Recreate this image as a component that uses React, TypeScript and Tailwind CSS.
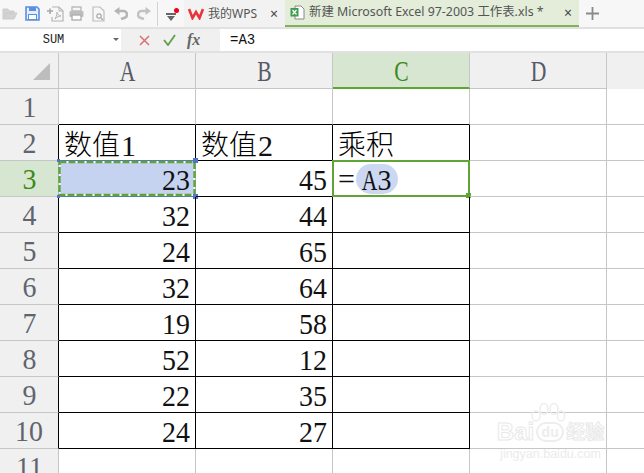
import React from 'react';

const ROWS: [string, string, string][] = [
  ['', '', ''],
  ['数值1', '数值2', '乘积'],
  ['23', '45', ''],
  ['32', '44', ''],
  ['24', '65', ''],
  ['32', '64', ''],
  ['19', '58', ''],
  ['52', '12', ''],
  ['22', '35', ''],
  ['24', '27', ''],
  ['', '', ''],
];

const SHEET_FONT = "font-['Liberation_Serif','Noto_Sans_CJK_SC',serif]";

function Narrow({ children }: { children: string }) {
  return <span className="inline-flex w-[15px] scale-x-[0.72] justify-center">{children}</span>;
}

function ToolIcons() {
  return (
    <div className="flex h-full w-[184px] shrink-0 items-center bg-[#f7f7f7] pl-[2px]">
      {/* open */}
      <svg width="16" height="14" viewBox="0 0 16 14" className="mr-[7px]">
        <path d="M1 12V2h5l1 2h5v2H4l-3 6h11l3-6H4" fill="#d2d2d2" stroke="#cccccc" />
      </svg>
      {/* save */}
      <svg width="15" height="15" viewBox="0 0 15 15" className="mr-[7px]">
        <path d="M1 1h11l2 2v11H1z" fill="#e6eefb" stroke="#5b8fe0" strokeWidth="1.6" />
        <rect x="4" y="1" width="7" height="4" fill="#5b8fe0" />
        <rect x="3.5" y="8.5" width="8" height="5" fill="#fff" stroke="#5b8fe0" />
      </svg>
      {/* export pdf */}
      <svg width="17" height="16" viewBox="0 0 17 16" className="mr-[5px]">
        <path d="M5 1h7l4 4v10H5v-4" fill="none" stroke="#b4b4b4" strokeWidth="1.2" />
        <path d="M12 1v4h4" fill="none" stroke="#b4b4b4" />
        <path d="M0 5h3V2.500M3 5h3M3 5v3" stroke="#a8a8a8" strokeWidth="1.6" fill="none" />
        <path d="M8 13c2-3 2-6 2-7 0 2 2 4 4 4-2 0-4 1-6 3z" fill="none" stroke="#b4b4b4" />
      </svg>
      {/* print */}
      <svg width="15" height="15" viewBox="0 0 15 15" className="mr-[8px]">
        <rect x="3" y="1" width="9" height="4" fill="none" stroke="#b8b8b8" strokeWidth="1.4" />
        <rect x="0.5" y="5" width="14" height="6" rx="1" fill="#bdbdbd" />
        <rect x="3" y="9" width="9" height="5" fill="#fff" stroke="#b0b0b0" strokeWidth="1.4" />
      </svg>
      {/* preview */}
      <svg width="13" height="16" viewBox="0 0 13 16" className="mr-[9px]">
        <path d="M1 1h7l4 4v10H1z" fill="none" stroke="#bdbdbd" strokeWidth="1.2" />
        <circle cx="7" cy="10" r="2.200" fill="none" stroke="#a8a8a8" strokeWidth="1.2" />
        <path d="M9 12l2 2" stroke="#a8a8a8" strokeWidth="1.4" />
      </svg>
      {/* undo */}
      <svg width="14" height="13" viewBox="0 0 14 13" className="mr-[9px]">
        <path d="M4 4h5a3.500 3.500 0 0 1 1 7l-3 1" fill="none" stroke="#b5b5b5" strokeWidth="2.6" />
        <path d="M5.500 0v8L0 4z" fill="#b5b5b5" />
      </svg>
      {/* redo */}
      <svg width="14" height="13" viewBox="0 0 14 13" className="mr-[6px]">
        <path d="M10 4H5a3.500 3.500 0 0 0-1 7l3 1" fill="none" stroke="#c2c2c2" strokeWidth="2.6" />
        <path d="M8.500 0v8L14 4z" fill="#c2c2c2" />
      </svg>
      <div className="mr-[8px] h-[24px] w-px bg-[#d2d2d2]" />
      {/* menu dropdown */}
      <div className="relative h-[14px] w-[11px]">
        <div className="absolute top-[6px] h-[2px] w-[10px] bg-[#666]" />
        <div className="absolute top-[9px] left-[1px] h-0 w-0 border-x-[4px] border-t-[5px] border-x-transparent border-t-[#666]" />
        <div className="absolute top-[1px] left-[8px] h-[5px] w-[5px] rounded-full bg-[#f00014]" />
      </div>
    </div>
  );
}

function TabBar() {
  return (
    <div className="flex h-[27px] w-full items-stretch bg-[#f7f7f7] font-['Noto_Sans','Noto_Sans_CJK_SC',sans-serif] text-[12px] text-[#555]">
      <ToolIcons />
      <div className="flex w-[101px] shrink-0 items-center bg-[#f2f2f2] pl-[4px]">
        <svg width="16" height="13" viewBox="0 0 16 13" className="mr-[4px]">
          <path d="M1 2l3.500 9 3.500-6 3.500 6L15 2" fill="none" stroke="#e8353b" strokeWidth="2.6" />
        </svg>
        <span className="whitespace-nowrap">我的WPS</span>
        <span className="ml-auto mr-[7px] text-[14px] leading-none text-[#444]">×</span>
      </div>
      <div className="flex w-[294px] shrink-0 items-center border-b-2 border-[#7fb35a] bg-[#e3edd9] pl-[5px]">
        <svg width="15" height="15" viewBox="0 0 15 15" className="mr-[4px]">
          <path d="M5 1h6l3 3v10H5z" fill="#fff" stroke="#8a8a8a" />
          <rect x="0.500" y="3" width="8" height="8.500" fill="#3f9b4f" />
          <path d="M2.500 5l4 4.500M6.500 5l-4 4.500" stroke="#fff" strokeWidth="1.3" />
        </svg>
        <span className="whitespace-nowrap text-[12.4px]">新建 Microsoft Excel 97-2003 工作表.xls *</span>
        <span className="ml-auto mr-[7px] text-[14px] leading-none text-[#444]">×</span>
      </div>
      <div className="flex w-[26px] shrink-0 items-center justify-center">
        <svg width="13" height="13" viewBox="0 0 13 13">
          <path d="M6.500 0v13M0 6.500h13" stroke="#8a8a8a" strokeWidth="1.800" />
        </svg>
      </div>
    </div>
  );
}

function FormulaBar() {
  return (
    <div className="flex h-[26px] w-full border-t-2 border-b-2 border-[#e1e1e1] bg-[#f0f0f0] font-['Liberation_Mono',monospace] text-[12px] text-[#222]">
      <div className="relative flex w-[121px] shrink-0 items-center justify-center bg-white pr-[14px]">
        SUM
        <div className="absolute right-[2px] top-[9px] h-0 w-0 border-x-[3px] border-t-[3px] border-x-transparent border-t-[#666]" />
      </div>
      <div className="flex w-[99px] shrink-0 items-center bg-[#f0f0f0] pl-[18px]">
        <svg width="11" height="11" viewBox="0 0 11 11" className="mr-[13px]">
          <path d="M1 1l9 9M10 1l-9 9" stroke="#d9706f" strokeWidth="1.500" />
        </svg>
        <svg width="13" height="12" viewBox="0 0 13 12" className="mr-[11px]">
          <path d="M1 6l4 5 7-10" fill="none" stroke="#5f9f4c" strokeWidth="1.800" />
        </svg>
        <span className="font-['Liberation_Serif',serif] text-[16px] font-bold italic text-[#666]">fx</span>
      </div>
      <div className="flex flex-1 items-center bg-white pl-[10px] text-[14px] text-[#111]">=A3</div>
    </div>
  );
}

function ColHeader({ label, active }: { label: string; active?: boolean }) {
  return (
    <div
      className={
        active
          ? 'flex w-[137px] shrink-0 items-center justify-center border-r border-b-2 border-r-[#c6c6c6] border-b-[#5fa536] bg-[#d7e6d0] text-[#3d8a1a]'
          : 'flex w-[137px] shrink-0 items-center justify-center border-r border-b border-[#c6c6c6] text-[#555a66]'
      }
    >
      <Narrow>{label}</Narrow>
    </div>
  );
}

function HeadText({ text }: { text: string }) {
  const cjk = text.replace(/[0-9]/g, '');
  const num = text.replace(/[^0-9]/g, '');
  return (
    <span className="flex items-center pt-[4px]">
      <span className="text-[28px] font-light text-black">{cjk}</span>
      {num && <span className="ml-[1px] text-[30px]">{num}</span>}
    </span>
  );
}

function Watermark() {
  return (
    <div className="pointer-events-none absolute left-[494px] top-[403px] flex w-[113px] flex-col items-center font-['Liberation_Sans','Noto_Sans_CJK_SC',sans-serif] font-bold leading-none">
      <svg width="34" height="20" viewBox="0 0 34 20" className="mb-[-3px] ml-[-6px]" fill="none" stroke="#ededed" strokeWidth="1.500">
        <ellipse cx="5" cy="13" rx="4" ry="5" />
        <ellipse cx="13" cy="6" rx="4" ry="5.500" />
        <ellipse cx="23" cy="6" rx="4" ry="5.500" />
        <ellipse cx="30" cy="13" rx="3.500" ry="5" />
      </svg>
      <div className="flex items-center text-[24px] text-white [-webkit-text-stroke:1px_#e9e9e9]">
        <span>Bai</span>
        <span className="mx-[2px] flex h-[20px] w-[28px] items-center justify-center rounded-full border-2 border-[#ededed] text-[14px] text-[#ededed] [-webkit-text-stroke:0]">
          du
        </span>
        <span className="text-[19px]">经验</span>
      </div>
      <div className="mt-[4px] text-[12.5px] font-normal text-[#ebebeb]">jingyan.baidu.com</div>
    </div>
  );
}

export default function App() {
  return (
    <div className="relative h-[473px] w-[644px] overflow-hidden bg-white">
      <TabBar />
      <FormulaBar />
      <div className={`flex h-[36px] bg-[#f0f0f0] text-[30px] ${SHEET_FONT}`}>
        <div className="relative w-[59px] shrink-0 border-r border-b border-[#c6c6c6]">
          <div className="absolute right-[8px] bottom-[8px] h-0 w-0 border-b-[17px] border-l-[17px] border-b-[#bdbdbd] border-l-transparent" />
        </div>
        <ColHeader label="A" />
        <ColHeader label="B" />
        <ColHeader label="C" active />
        <ColHeader label="D" />
      </div>
      {ROWS.map((row, i) => {
        const n = i + 1;
        const black = n >= 1 && n <= 10;
        const isSel = n === 3;
        return (
          <div key={n} className={`flex h-[36px] text-[30px] leading-none ${SHEET_FONT}`}>
            <div
              className={`flex w-[59px] shrink-0 items-center justify-center border-b border-b-[#c6c6c6] border-r ${
                n >= 2 && n <= 10 ? 'border-r-black' : 'border-r-[#c6c6c6]'
              } ${isSel ? 'bg-[#d7e6d0] text-[#3d8a1a]' : 'bg-[#f0f0f0] text-[#60646e]'}`}
            >
              <span className="inline-block scale-x-[0.93]">{n}</span>
            </div>
            {row.map((val, c) => {
              const isHead = n === 2;
              return (
                <div
                  key={c}
                  className={`relative flex w-[137px] shrink-0 items-center border-r border-b pr-[5px] pl-[5px] pt-[2px] text-[#111] ${
                    isHead ? 'justify-start' : 'justify-end'
                  } ${black ? 'border-b-black' : 'border-b-[#c6c6c6]'} ${
                    n >= 2 && n <= 10 ? 'border-r-black' : 'border-r-[#c6c6c6]'
                  } ${isSel && c === 0 ? 'bg-[#c5d2f0]' : ''}`}
                >
                  {isHead ? <HeadText text={val} /> : <span className="inline-block origin-right scale-x-[0.93]">{val}</span>}
                  {isSel && c === 0 && (
                    <>
                      <svg width="138" height="37" viewBox="0 0 138 37" className="absolute -left-px -top-px" fill="none">
                        <rect x="0.500" y="0.500" width="137" height="36" stroke="#4f74c9" />
                        <rect x="1.500" y="2" width="135" height="33" stroke="#fff" strokeWidth="2" />
                        <rect x="1.500" y="2" width="135" height="33" stroke="#5fa536" strokeWidth="2.500" strokeDasharray="7 2" />
                      </svg>
                      <div className="absolute -right-[3px] -top-[3px] h-[5px] w-[5px] bg-[#4f74c9]" />
                      <div className="absolute -right-[3px] -bottom-[3px] h-[5px] w-[5px] bg-[#4f74c9]" />
                      <div className="absolute -left-[2px] -top-[2px] h-[3px] w-[3px] bg-[#4f74c9]" />
                      <div className="absolute -left-[2px] -bottom-[2px] h-[3px] w-[3px] bg-[#4f74c9]" />
                    </>
                  )}
                  {isSel && c === 2 && (
                    <>
                      <div className="absolute inset-0 flex items-center justify-start pl-[5px] pt-[1px]">
                        <span className="mr-[1px]">=</span>
                        <span className="flex h-[30px] items-center rounded-full bg-[#ccd7f2] px-[6px] pt-[2px]">
                          <Narrow>A</Narrow>
                          <span className="inline-block scale-x-[0.93]">3</span>
                        </span>
                      </div>
                      <div className="absolute -inset-x-px -top-px -bottom-px border-2 border-[#5fa536]" />
                      <div className="absolute -right-[2px] -bottom-[2px] h-[5px] w-[5px] bg-[#5fa536]" />
                    </>
                  )}
                </div>
              );
            })}
            <div className="relative flex w-[137px] shrink-0 border-r border-b border-[#c6c6c6]" />
            <div className="flex-1 border-b border-[#c6c6c6]" />
          </div>
        );
      })}
      <Watermark />
    </div>
  );
}
